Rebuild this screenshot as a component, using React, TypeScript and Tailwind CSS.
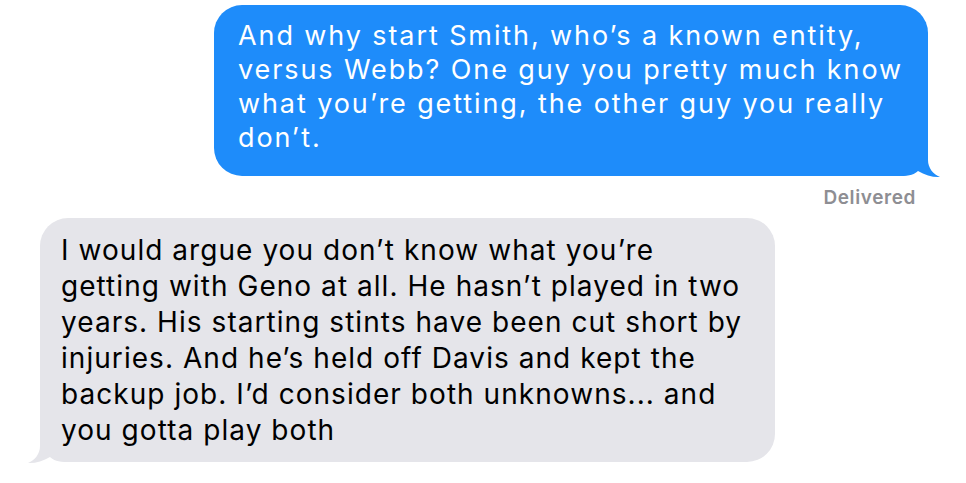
const sent = [
  "And why start Smith, who\u2019s a known entity,",
  "versus Webb? One guy you pretty much know",
  "what you\u2019re getting, the other guy you really",
  "don\u2019t.",
];

const received = [
  "I would argue you don\u2019t know what you\u2019re",
  "getting with Geno at all. He hasn\u2019t played in two",
  "years. His starting stints have been cut short by",
  "injuries. And he\u2019s held off Davis and kept the",
  "backup job. I\u2019d consider both unknowns... and",
  "you gotta play both",
];

function Tail({ color, flip }: { color: string; flip?: boolean }) {
  return (
    <svg
      width="44"
      height="38"
      viewBox="0 0 44 38"
      className={
        flip
          ? "absolute -left-[12px] -bottom-[2px] -scale-x-100"
          : "absolute -right-[12px] -bottom-[2px]"
      }
    >
      <path
        d="M32 0 L32 20 C32 28 37 34 44 37 C37 37.5 29 35 22 31 C19 34 14 36 4 36 L4 0 Z"
        fill={color}
      />
    </svg>
  );
}

export default function App() {
  return (
    <div className="w-[966px] h-[483px] bg-white overflow-hidden">
      <div className="flex flex-col pt-[5px]">
        <div className="relative ml-[214px] w-[714px] h-[171px] rounded-[28px] bg-[#1e8cfa] pl-[24px] pt-[14px]">
          <Tail color="#1e8cfa" />
          <div className="relative">
            {sent.map((line) => (
              <div
                key={line}
                className="font-['Inter',sans-serif] text-[27px] leading-[34px] tracking-[1.9px] text-white whitespace-nowrap"
              >
                {line}
              </div>
            ))}
          </div>
        </div>

        <div className="self-end mr-[50px] mt-[11px] font-['Inter',sans-serif] font-semibold text-[19px] leading-[22px] tracking-[0.6px] text-[#8e8e93]">
          Delivered
        </div>

        <div className="relative ml-[40px] mt-[9px] w-[735px] h-[244px] rounded-[28px] bg-[#e5e5ea] pl-[21px] pt-[14px]">
          <Tail color="#e5e5ea" flip />
          <div className="relative">
            {received.map((line) => (
              <div
                key={line}
                className="font-['Inter',sans-serif] text-[28px] leading-[36px] tracking-[1.05px] text-black whitespace-nowrap"
              >
                {line}
              </div>
            ))}
          </div>
        </div>
      </div>
    </div>
  );
}
